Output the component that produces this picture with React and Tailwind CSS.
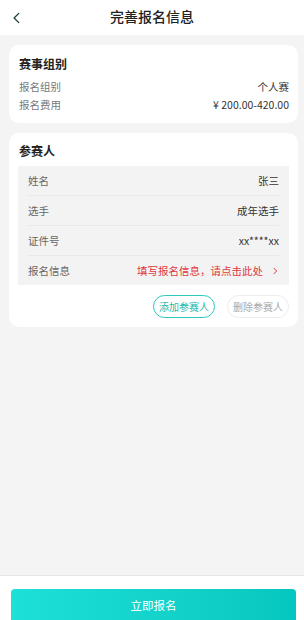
import React from 'react';

const PLAYER_ROWS = [
  { label: '姓名', value: '张三' },
  { label: '选手', value: '成年选手' },
  { label: '证件号', value: 'xx****xx' },
];

const font = { fontFamily: '"Noto Sans CJK SC", "Noto Sans", sans-serif' };

export default function App() {
  return (
    <div className="flex h-[620px] w-[304px] flex-col overflow-hidden bg-[#f4f4f4]" style={font}>
      <header className="relative flex h-[35px] shrink-0 items-center justify-center bg-white pb-[3px]">
        <svg
          className="absolute left-[10px] top-[11px]"
          width="14"
          height="14"
          viewBox="0 0 24 24"
          fill="none"
          stroke="#1f3d2e"
          strokeWidth="2.2"
          strokeLinecap="round"
          strokeLinejoin="round"
        >
          <path d="M15 4l-8 8 8 8" />
        </svg>
        <h1 className="text-[14px] font-medium leading-none text-[#222]">完善报名信息</h1>
      </header>

      <main className="flex-1 pl-[9px] pr-[6px] pt-[10px]">
        <section className="rounded-[10px] bg-white pb-[9px] pl-[10px] pr-[9px] pt-[10px]">
          <h2 className="text-[12px] font-bold leading-[18px] text-[#222]">赛事组别</h2>
          <div className="mt-[5px] flex items-center justify-between text-[10.5px] leading-[18px]">
            <span className="text-[#777]">报名组别</span>
            <span className="text-[#333]">个人赛</span>
          </div>
          <div className="flex items-center justify-between text-[10.5px] leading-[18px]">
            <span className="text-[#777]">报名费用</span>
            <span className="text-[#333]">¥ 200.00-420.00</span>
          </div>
        </section>

        <section className="mt-[10px] rounded-[10px] bg-white pb-[9px] pl-[9px] pr-[9px] pt-[9px]">
          <h2 className="pl-[1px] text-[12px] font-bold leading-[18px] text-[#222]">参赛人</h2>
          <div className="mt-[6px] bg-[#f3f3f3] px-[10px]">
            {PLAYER_ROWS.map((row) => (
              <div
                key={row.label}
                className="flex h-[30px] items-center justify-between border-b border-[#e9e9e9] text-[10.5px]"
              >
                <span className="text-[#666]">{row.label}</span>
                <span className="text-[#333]">{row.value}</span>
              </div>
            ))}
            <div className="flex h-[29px] items-center justify-between text-[10.5px]">
              <span className="text-[#666]">报名信息</span>
              <span className="flex items-center gap-[8px] text-[#e0363e]">
                填写报名信息，请点击此处
                <svg width="8" height="8" viewBox="0 0 24 24" fill="none" stroke="#e0363e" strokeWidth="3" strokeLinecap="round" strokeLinejoin="round">
                  <path d="M9 4l8 8-8 8" />
                </svg>
              </span>
            </div>
          </div>
          <div className="mt-[10px] flex justify-end gap-[12px]">
            <button
              type="button"
              className="h-[23px] w-[62px] rounded-full border border-[#2cc7be] bg-white text-[10px] text-[#1fb8ae]"
            >
              添加参赛人
            </button>
            <button
              type="button"
              className="h-[23px] w-[62px] rounded-full border border-[#ececec] bg-white text-[10px] text-[#aaa]"
            >
              删除参赛人
            </button>
          </div>
        </section>
      </main>

      <footer className="h-[45px] shrink-0 border-t border-[#e6e6e6] bg-white pl-[11px] pr-[8px] pt-[13px]">
        <button
          type="button"
          className="h-[34px] w-full rounded-t-[4px] bg-gradient-to-r from-[#1de0d8] to-[#06c7bf] text-[11.5px] text-white"
        >
          立即报名
        </button>
      </footer>
    </div>
  );
}
